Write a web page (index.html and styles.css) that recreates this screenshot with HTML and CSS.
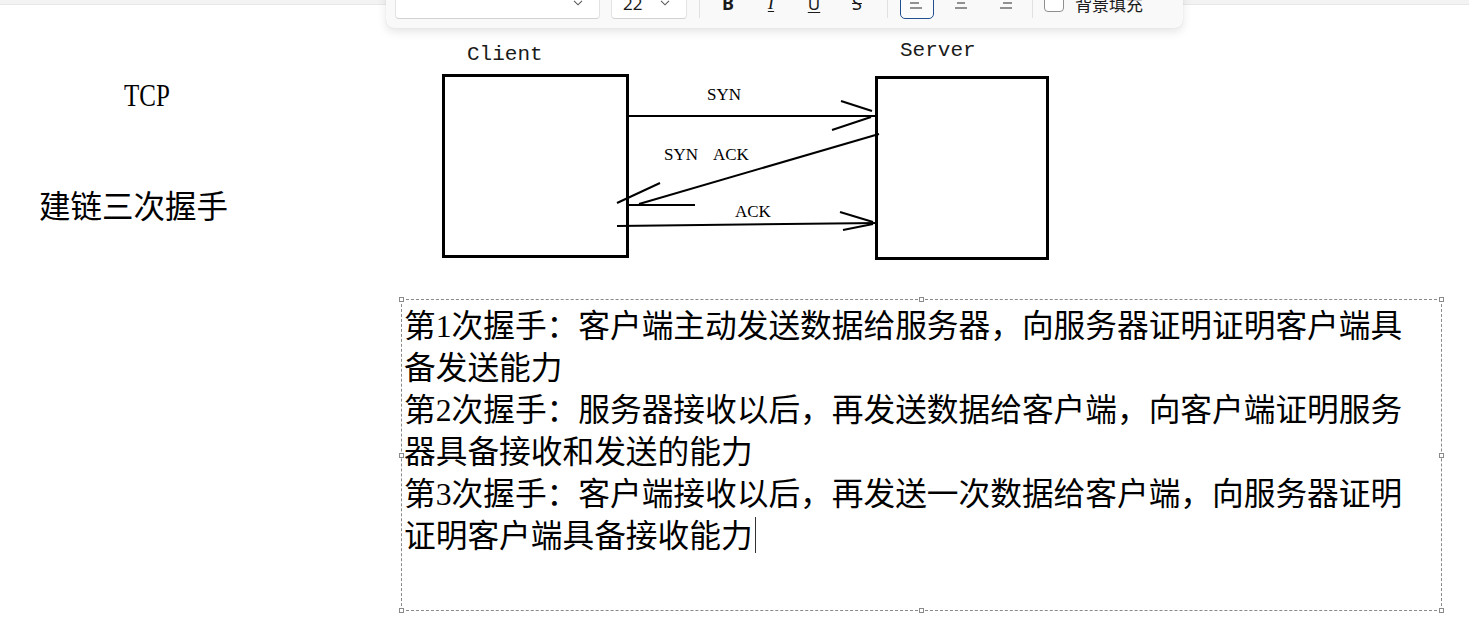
FILE: index.html
```html
<!DOCTYPE html>
<html lang="zh-CN">
<head>
<meta charset="utf-8">
<title>TCP 建链三次握手</title>
<link rel="stylesheet" href="styles.css">
</head>
<body>
<div class="page">
  <div class="topbar"></div>

  <div class="toolbar">
    <div class="select font-select">
      <svg class="chev" width="10" height="6" viewBox="0 0 10 6"><path d="M1 0.8 L5 4.8 L9 0.8" /></svg>
    </div>
    <div class="select size-select">
      <span>22</span>
      <svg class="chev" width="10" height="6" viewBox="0 0 10 6"><path d="M1 0.8 L5 4.8 L9 0.8" /></svg>
    </div>
    <div class="sep"></div>
    <div class="btn first"><span class="g-bold">B</span></div>
    <div class="btn"><span class="g-italic">I</span></div>
    <div class="btn"><span class="g-under">U</span></div>
    <div class="btn"><span class="g-strike">S</span></div>
    <div class="sep sep2"></div>
    <div class="btn align active">
      <svg width="16" height="16" viewBox="0 0 16 16"><path d="M1 3 H15 M1 8 H10 M1 13 H13" /></svg>
    </div>
    <div class="btn align">
      <svg width="16" height="16" viewBox="0 0 16 16"><path d="M1 3 H15 M4 8 H12 M2 13 H14" /></svg>
    </div>
    <div class="btn align">
      <svg width="16" height="16" viewBox="0 0 16 16"><path d="M1 3 H15 M6 8 H15 M3 13 H15" /></svg>
    </div>
    <div class="sep sep3"></div>
    <div class="checkbox"></div>
    <div class="check-label">背景填充</div>
  </div>

  <div class="canvas">
    <div class="label tcp"><span class="narrow">TCP</span></div>
    <div class="label heading">建链三次握手</div>

    <svg class="diagram" width="640" height="230" viewBox="430 36 640 230">
      <text class="mono" x="467" y="60">Client</text>
      <text class="mono" x="900" y="56">Server</text>
      <rect class="box" x="443.5" y="75.5" width="184" height="181" />
      <rect class="box" x="876.5" y="77.5" width="171" height="181" />

      <text class="msg" x="707" y="100">SYN</text>
      <line class="ln" x1="628" y1="116" x2="876" y2="116" />
      <line class="ln" x1="841" y1="101" x2="872" y2="111" />
      <line class="ln" x1="832" y1="130" x2="871" y2="117" />

      <text class="msg" x="664" y="160">SYN</text>
      <text class="msg" x="713" y="160">ACK</text>
      <line class="ln" x1="879" y1="134" x2="639" y2="204" />
      <line class="ln" x1="617" y1="203" x2="660" y2="183" />
      <line class="ln" x1="628" y1="205" x2="695" y2="205" />

      <text class="msg" x="735" y="217">ACK</text>
      <line class="ln" x1="617" y1="226" x2="878" y2="223" />
      <line class="ln" x1="840" y1="212" x2="873" y2="222" />
      <line class="ln" x1="843" y1="230" x2="873" y2="224" />
    </svg>

    <div class="textbox">
      <span class="handle h-tl"></span><span class="handle h-tc"></span><span class="handle h-tr"></span>
      <span class="handle h-ml"></span><span class="handle h-mr"></span>
      <span class="handle h-bl"></span><span class="handle h-bc"></span><span class="handle h-br"></span>
      <p class="para">第1次握手：客户端主动发送数据给服务器，向服务器证明证明客户端具<br>备发送能力</p>
      <p class="para">第2次握手：服务器接收以后，再发送数据给客户端，向客户端证明服务<br>器具备接收和发送的能力</p>
      <p class="para">第3次握手：客户端接收以后，再发送一次数据给客户端，向服务器证明<br>证明客户端具备接收能力<span class="caret"></span></p>
    </div>
  </div>
</div>
</body>
</html>
```

FILE: styles.css
```css
* { box-sizing: border-box; }

html, body {
  margin: 0;
  padding: 0;
  background: #ffffff;
}

body {
  width: 1469px;
  height: 626px;
  overflow: hidden;
  font-family: "Noto Sans", "Noto Sans CJK SC", sans-serif;
  color: #000;
}

.page {
  position: relative;
  width: 1469px;
  height: 626px;
  overflow: hidden;
}

.topbar {
  height: 5px;
  background: #f3f3f3;
  border-bottom: 1px solid #e7e7e7;
}

/* ---------- floating toolbar ---------- */
.toolbar {
  position: absolute;
  left: 386px;
  top: -30px;
  width: 797px;
  height: 58px;
  padding: 8px 9px 0;
  display: flex;
  align-items: center;
  background: #f9f9f9;
  border-radius: 8px;
  box-shadow: 0 4px 10px rgba(0, 0, 0, 0.10), 0 0 1px rgba(0, 0, 0, 0.12);
  z-index: 10;
}

.select {
  height: 32px;
  background: #ffffff;
  border: 1px solid #e3e3e3;
  border-bottom-color: #d2d2d2;
  border-radius: 4px;
  display: flex;
  align-items: center;
  justify-content: space-between;
}

.font-select {
  width: 205px;
  padding: 0 16px 0 10px;
  justify-content: flex-end;
}

.size-select {
  width: 76px;
  margin-left: 11px;
  padding: 0 16px 0 11px;
  font-size: 17px;
  color: #1b1b1b;
}

.chev path {
  fill: none;
  stroke: #5a5a5a;
  stroke-width: 1.1;
}

.sep {
  width: 1px;
  height: 30px;
  background: #e1e1e1;
  margin-left: 12px;
}
.sep2 { margin-left: 13px; }
.sep3 { margin-left: 10px; }

.btn {
  width: 34px;
  height: 32px;
  margin-left: 9px;
  display: flex;
  align-items: center;
  justify-content: center;
  border-radius: 5px;
  border: 1px solid transparent;
  color: #1b1b1b;
  font-size: 16px;
}
.btn.first { margin-left: 11px; }
.btn.align { margin-left: 10px; }
.sep2 + .btn.align { margin-left: 12px; }

.btn.active {
  border: 1px solid #1f4f8f;
  background: #fbfbfb;
}

.btn.align path {
  fill: none;
  stroke: #2a2a2a;
  stroke-width: 1.2;
}

.g-bold { font-weight: 700; font-size: 18px; }
.g-italic {
  font-family: "Liberation Serif", serif;
  font-style: italic;
  font-size: 19px;
  text-decoration: underline;
  text-underline-offset: 2px;
}
.g-under {
  font-size: 17px;
  text-decoration: underline;
  text-underline-offset: 2px;
}
.g-strike {
  font-size: 18px;
  text-decoration: line-through;
}

.checkbox {
  width: 20px;
  height: 20px;
  margin-left: 11px;
  border: 1px solid #8f8f8f;
  border-radius: 4px;
  background: #ffffff;
  transform: translateY(-1px);
}

.check-label {
  margin-left: 11px;
  font-family: "Noto Sans CJK SC", sans-serif;
  font-size: 17px;
  color: #1b1b1b;
}

/* ---------- note canvas (free placement) ---------- */
.canvas {
  position: relative;
  height: 621px;
}

.label {
  position: absolute;
  font-family: "Liberation Serif", "Noto Sans CJK SC", serif;
  line-height: 1;
  color: #000;
  white-space: nowrap;
}

.tcp {
  left: 124px;
  top: 74px;
  font-size: 32px;
}

.narrow {
  display: inline-block;
  transform: scaleX(0.78);
  transform-origin: left center;
}

.heading {
  left: 39px;
  top: 187px;
  font-size: 31.5px;
}

.diagram {
  position: absolute;
  left: 430px;
  top: 31px;
}

.diagram .mono {
  font-family: "Liberation Mono", monospace;
  font-size: 21px;
  fill: #1a1a1a;
}

.diagram .msg {
  font-family: "Liberation Serif", serif;
  font-size: 17px;
  fill: #000;
}

.diagram .box {
  fill: none;
  stroke: #000;
  stroke-width: 3;
}

.diagram .ln {
  stroke: #000;
  stroke-width: 2;
}

.textbox {
  position: absolute;
  left: 401px;
  top: 294px;
  width: 1041px;
  height: 312px;
  border: 1px dashed #8a8a8a;
  padding: 6px 0 0 2px;
}

.para {
  margin: 0;
  font-family: "Liberation Serif", "Noto Sans CJK SC", serif;
  font-size: 31.7px;
  line-height: 42px;
  color: #000;
  white-space: nowrap;
}

.caret {
  display: inline-block;
  width: 1px;
  height: 36px;
  margin-left: 2px;
  margin-top: 1px;
  vertical-align: top;
  background: #333;
}

.handle {
  position: absolute;
  width: 5px;
  height: 5px;
  border: 1px solid #8a8a8a;
  background: #fff;
}
.h-tl { left: -3px; top: -3px; }
.h-tc { left: 517px; top: -3px; }
.h-tr { right: -3px; top: -3px; }
.h-ml { left: -3px; top: 153px; }
.h-mr { right: -3px; top: 153px; }
.h-bl { left: -3px; bottom: -3px; }
.h-bc { left: 517px; bottom: -3px; }
.h-br { right: -3px; bottom: -3px; }
```
